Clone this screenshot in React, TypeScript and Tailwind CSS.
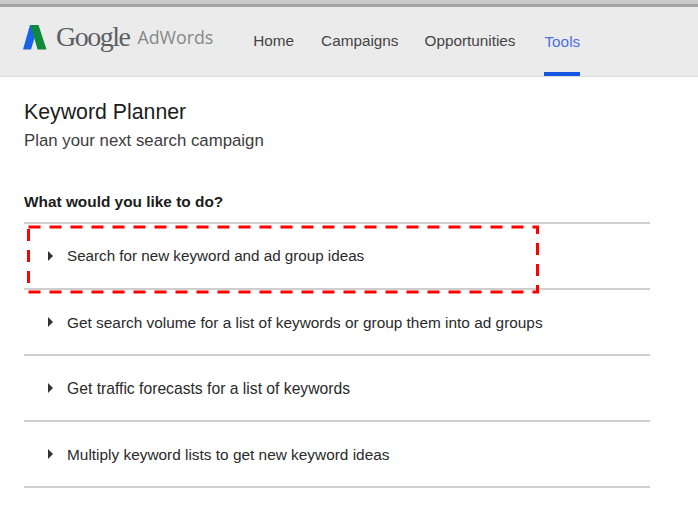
const navItems = [
  { label: 'Home', className: 'ml-[40px] mt-[-1px]' },
  { label: 'Campaigns', className: 'ml-[27px] mt-[-1px]' },
  { label: 'Opportunities', className: 'ml-[26px] mt-[-1px]' },
]

const options = [
  { label: 'Search for new keyword and ad group ideas', size: 'text-[15.2px]' },
  { label: 'Get search volume for a list of keywords or group them into ad groups', size: 'text-[15.4px]' },
  { label: 'Get traffic forecasts for a list of keywords', size: 'text-[15.7px]' },
  { label: 'Multiply keyword lists to get new keyword ideas', size: 'text-[15.4px]' },
]

function AdWordsMark() {
  return (
    <svg width="25" height="27" viewBox="0 0 25 27" className="shrink-0">
      <path d="M8 1h8.5L9 25.5H1z" fill="#1a62e8" />
      <path d="M8.5 1h8L24.5 25.5h-9z" fill="#0f8a3c" />
    </svg>
  )
}

export default function App() {
  return (
    <div className="relative h-[519px] w-[698px] overflow-hidden bg-white font-['Liberation_Sans',Arial,sans-serif]">
      <header className="h-[77px] border-b border-[#dcdcdc] bg-[#ebebeb]">
        <div className="h-[4px] bg-[#c9c9c9]" />
        <div className="h-[3px] bg-[#a3a3a3]" />
        <div className="relative flex h-[69px] items-start pl-[22px]">
          <div className="mt-[15px] flex items-center">
            <AdWordsMark />
            <span className="ml-[9px] font-['Liberation_Serif',serif] text-[28px] leading-[30px] tracking-[-1.5px] text-[#5c6064]">
              Google
            </span>
            <span className="ml-[8px] font-['Open_Sans',sans-serif] text-[17.8px] leading-[30px] text-[#85888a]">
              AdWords
            </span>
          </div>
          <nav className="flex items-start pt-[26px] text-[15.3px] leading-[18px] text-[#444444]">
            {navItems.map((item) => (
              <span key={item.label} className={item.className}>
                {item.label}
              </span>
            ))}
            <span className="relative ml-[29px] text-[#4a6fe0]">
              Tools
              <span className="absolute left-0 right-0 top-[39px] h-[4px] bg-[#1556e0]" />
            </span>
          </nav>
        </div>
      </header>

      <main className="pl-[24px] pr-[48px]">
        <h1 className="mt-[23px] text-[21.3px] leading-[24px] text-[#1c1c1c]">Keyword Planner</h1>
        <p className="mt-[7px] text-[16.8px] leading-[20px] text-[#3c3c3c]">
          Plan your next search campaign
        </p>
        <h2 className="mt-[42px] text-[15.4px] font-bold leading-[18px] text-[#1c1c1c]">
          What would you like to do?
        </h2>
        <ul className="mt-[11px] border-t-2 border-[#cfcfcf]">
          {options.map((option) => (
            <li
              key={option.label}
              className={`flex h-[66px] items-center border-b-2 border-[#cfcfcf] pl-[24px] text-[#2a2a2a] ${option.size}`}
            >
              <span className="mr-[14px] h-0 w-0 border-y-[5px] border-l-[5px] border-y-transparent border-l-[#333333]" />
              <span className="pt-px">{option.label}</span>
            </li>
          ))}
        </ul>
      </main>

      <svg width="514" height="70" className="absolute left-[26px] top-[225px]">
        <rect
          x="2.5"
          y="2"
          width="509"
          height="65"
          fill="none"
          stroke="#ff0000"
          strokeWidth="3"
          strokeDasharray="12 9"
        />
      </svg>
    </div>
  )
}
